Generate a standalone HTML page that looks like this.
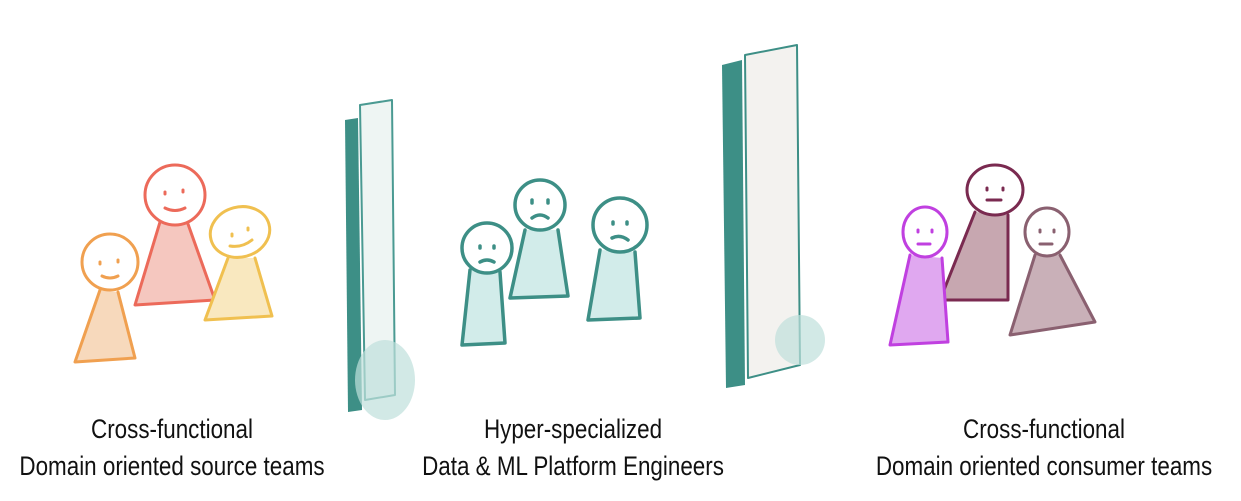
<!DOCTYPE html>
<html><head><meta charset="utf-8"><style>
body{margin:0;background:#fff;width:1241px;height:501px;overflow:hidden;position:relative}
.t{position:absolute;width:500px;font-family:"Liberation Sans Narrow","Liberation Sans",sans-serif;font-size:27px;color:#111;text-align:center;line-height:37px;white-space:nowrap;transform:scaleX(.83);transform-origin:center}
</style></head><body>
<svg width="1241" height="501" style="position:absolute;left:0;top:0" fill="none" stroke-linecap="round" stroke-linejoin="round">
<g stroke="#f0a050" stroke-width="3"><path d="M100 290 L75 362 L135 358 L118 292" fill="#f7d9bc"/><circle cx="110" cy="262" r="28" fill="#fff"/><path d="M100 262v2M118 260v2M102 276q8 4 16 0"/></g>
<g stroke="#ec6a5a" stroke-width="3"><path d="M160 222 L135 305 L215 300 L188 224" fill="#f5c7bf"/><ellipse cx="175" cy="195" rx="30" ry="30" fill="#fff"/><path d="M165 192v2M183 190v2M165 208q10 5 20 0"/></g>
<g stroke="#f0c050" stroke-width="3"><path d="M228 258 L205 320 L272 316 L255 258" fill="#f9e8bf"/><ellipse cx="240" cy="232" rx="30" ry="25" fill="#fff" transform="rotate(-15 240 232)"/><path d="M232 234v2M248 228v2M230 246q12 2 22-6"/></g>
<path d="M360 105 L392 100 L395 395 L365 400 Z" fill="#eef5f3" stroke="#4a9a92" stroke-width="2"/>
<path d="M345 120 L358 118 L362 410 L348 412 Z" fill="#3d8f86"/>
<ellipse cx="385" cy="380" rx="30" ry="40" fill="#bfe0dc" opacity=".7"/>
<g stroke="#3d8f86" stroke-width="3.5">
<path d="M470 270 L462 345 L505 343 L500 272" fill="#d2ecea"/><circle cx="487" cy="248" r="25" fill="#fff"/><path d="M480 246v2M494 246v2M480 262q7-4 14 0"/>
<path d="M525 230 L510 298 L568 296 L558 230" fill="#d2ecea"/><circle cx="540" cy="205" r="25" fill="#fff"/><path d="M532 200v3M548 200v3M532 218q8-6 16 0"/>
<path d="M600 250 L588 320 L640 318 L635 252" fill="#d2ecea"/><circle cx="620" cy="225" r="27" fill="#fff"/><path d="M613 222v2M627 222v2M612 238q8-4 16 2"/></g>
<path d="M745 55 L797 45 L800 365 L748 378 Z" fill="#f3f2ef" stroke="#3d8f86" stroke-width="2"/>
<path d="M722 65 L742 60 L745 385 L726 388 Z" fill="#3d8f86"/>
<ellipse cx="800" cy="340" rx="25" ry="25" fill="#bfe0dc" opacity=".7"/>
<g stroke="#7a2a50" stroke-width="3"><path d="M975 212 L940 300 L1008 300 L1008 215" fill="#c7a7b0"/><ellipse cx="995" cy="190" rx="28" ry="25" fill="#fff"/><path d="M987 188v2M1003 188v2M987 200h14"/></g>
<g stroke="#c040e0" stroke-width="3"><path d="M910 255 L890 345 L948 342 L942 258" fill="#e0a8f0"/><ellipse cx="925" cy="232" rx="22" ry="25" fill="#fff"/><path d="M918 230v2M932 230v2M918 244h12"/></g>
<g stroke="#8a6070" stroke-width="3"><path d="M1035 255 L1010 335 L1095 322 L1060 255" fill="#c9b0b8"/><ellipse cx="1047" cy="232" rx="22" ry="24" fill="#fff"/><path d="M1040 230v2M1054 230v2M1040 244h12"/></g>
</svg>
<div class="t" style="left:-78px;top:411px">Cross-functional<br>Domain oriented source teams</div>
<div class="t" style="left:323px;top:411px">Hyper-specialized<br>Data &amp; ML Platform Engineers</div>
<div class="t" style="left:794px;top:411px">Cross-functional<br>Domain oriented consumer teams</div>
</body></html>
